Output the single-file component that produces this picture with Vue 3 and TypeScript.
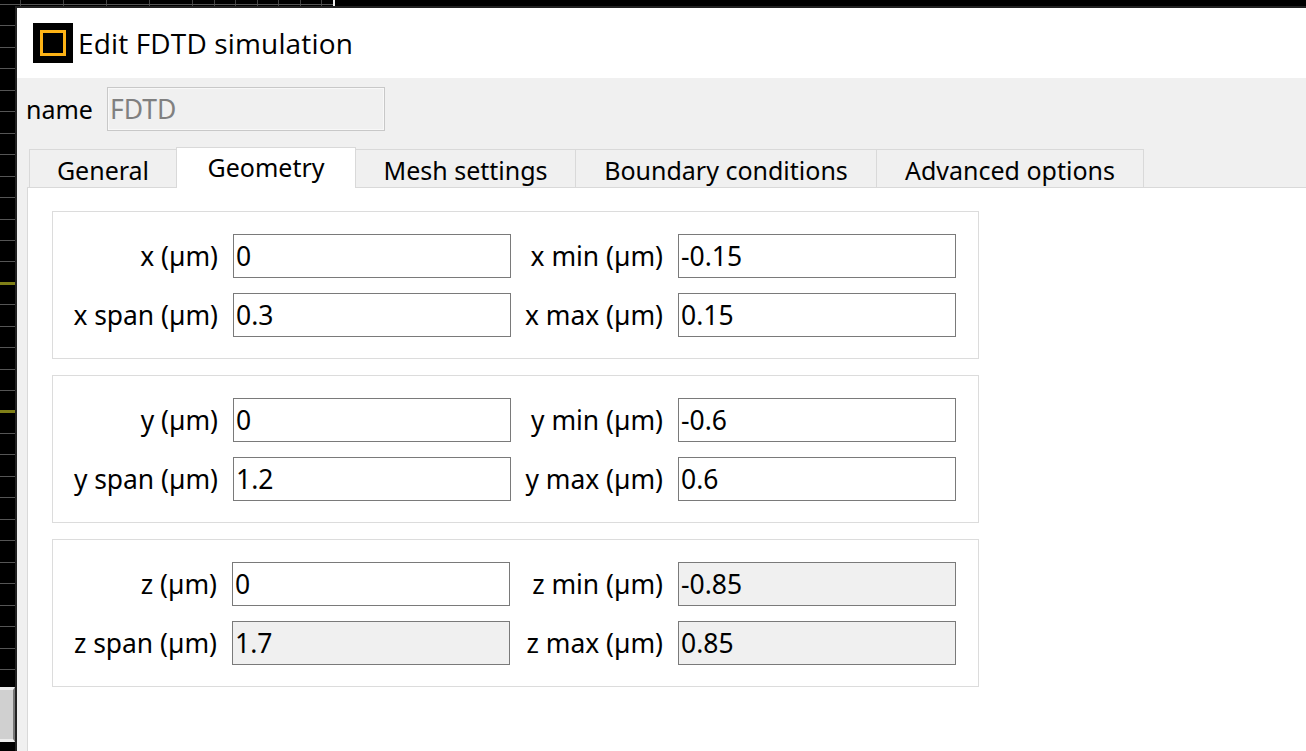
<script setup lang="ts">
interface Field { label: string; value: string; disabled?: boolean }
interface Row { left: Field; right: Field }
interface Group { shift: boolean; rows: Row[] }

const tabs = ['General', 'Geometry', 'Mesh settings', 'Boundary conditions', 'Advanced options']
const groups: Group[] = [
  { shift: false, rows: [
    { left: { label: 'x (µm)', value: '0' }, right: { label: 'x min (µm)', value: '-0.15' } },
    { left: { label: 'x span (µm)', value: '0.3' }, right: { label: 'x max (µm)', value: '0.15' } },
  ] },
  { shift: false, rows: [
    { left: { label: 'y (µm)', value: '0' }, right: { label: 'y min (µm)', value: '-0.6' } },
    { left: { label: 'y span (µm)', value: '1.2' }, right: { label: 'y max (µm)', value: '0.6' } },
  ] },
  { shift: true, rows: [
    { left: { label: 'z (µm)', value: '0' }, right: { label: 'z min (µm)', value: '-0.85', disabled: true } },
    { left: { label: 'z span (µm)', value: '1.7', disabled: true }, right: { label: 'z max (µm)', value: '0.85', disabled: true } },
  ] },
]
</script>

<template>
  <div class="desktop">
    <div class="grid"></div>
    <div class="edge"></div>
    <div class="wire w1"></div>
    <div class="wire w2"></div>
    <div class="side-button"></div>
    <div class="window">
      <header class="titlebar">
        <svg class="logo" width="40" height="40" viewBox="0 0 40 40">
          <rect width="40" height="40" fill="#000" />
          <rect x="8.5" y="8.5" width="23" height="23" fill="none" stroke="#fdb316" stroke-width="3" />
        </svg>
        <span class="title">Edit FDTD simulation</span>
      </header>
      <div class="body">
        <div class="name-row">
          <span class="name-label">name</span>
          <div class="name-input">FDTD</div>
        </div>
        <div class="tabs">
          <div v-for="t in tabs" :key="t" class="tab" :class="{ active: t === 'Geometry' }">{{ t }}</div>
        </div>
        <div class="page">
          <section v-for="(g, i) in groups" :key="i" class="group" :class="{ shift: g.shift }">
            <div v-for="r in g.rows" :key="r.left.label" class="row">
              <label class="lab left">{{ r.left.label }}</label>
              <div class="field" :class="{ disabled: r.left.disabled }">{{ r.left.value }}</div>
              <label class="lab right">{{ r.right.label }}</label>
              <div class="field f2" :class="{ disabled: r.right.disabled }">{{ r.right.value }}</div>
            </div>
          </section>
        </div>
      </div>
    </div>
  </div>
</template>

<style>
html, body { margin: 0; background: #000; overflow: hidden; }
</style>

<style scoped>
.desktop {
  position: relative;
  width: 1306px;
  height: 751px;
  overflow: hidden;
  background: #000;
  font-family: "Noto Sans", sans-serif;
  color: #000;
}
.grid {
  position: absolute;
  left: 0;
  top: 0;
  width: 333px;
  height: 751px;
  background-image:
    repeating-linear-gradient(to bottom, transparent 0 4px, #555 4px 5px, transparent 5px 21.45px),
    repeating-linear-gradient(to right, transparent 0 20px, #444 20px 21px, transparent 21px 21.5px);
  border-right: 2px solid #eee;
}
.edge {
  position: absolute;
  left: 15px;
  top: 6px;
  width: 1291px;
  height: 745px;
  background: #222;
}
.wire {
  position: absolute;
  left: 0;
  width: 15px;
  height: 3px;
  background: #808018;
}
.w1 { top: 282px; }
.w2 { top: 410px; }
.side-button {
  position: absolute;
  left: 0;
  top: 687px;
  width: 15px;
  height: 55px;
  box-sizing: border-box;
  background: #d0d0d0;
  border-top: 3px solid #ececec;
  border-bottom: 3px solid #ececec;
  border-right: 2px solid #777;
}
.window {
  position: absolute;
  left: 17px;
  top: 8px;
  width: 1289px;
  height: 743px;
  display: flex;
  flex-direction: column;
  background: #f0f0f0;
}
.titlebar {
  height: 70px;
  flex: none;
  background: #fff;
  display: flex;
  align-items: center;
  padding-left: 16px;
}
.logo { display: block; }
.title {
  margin-left: 5px;
  font-family: "Open Sans", sans-serif;
  font-size: 28px;
  letter-spacing: 0.15px;
  white-space: nowrap;
}
.body { flex: 1; display: flex; flex-direction: column; min-height: 0; }
.name-row {
  display: flex;
  align-items: center;
  height: 44px;
  margin-top: 9px;
  padding-left: 9px;
}
.name-label { font-size: 25px; width: 81px; }
.name-input {
  box-sizing: border-box;
  width: 278px;
  height: 44px;
  line-height: 43px;
  padding-left: 2px;
  border: 1px solid #c8c8c8;
  box-shadow: inset 0 0 0 1px #f8f8f8;
  font-size: 26.5px;
  color: #808080;
}
.tabs {
  display: flex;
  height: 40px;
  margin-top: 16px;
  padding-left: 13px;
  align-items: flex-end;
  position: relative;
  z-index: 1;
}
.tab {
  height: 38px;
  line-height: 41px;
  box-sizing: border-box;
  border: 1px solid #d9d9d9;
  border-bottom: 0;
  margin-left: -1px;
  text-align: center;
  font-size: 25px;
  white-space: nowrap;
  flex: none;
}
.tab:nth-child(1) { width: 148px; }
.tab:nth-child(2) { width: 180px; }
.tab:nth-child(3) { width: 221px; }
.tab:nth-child(4) { width: 302px; }
.tab:nth-child(5) { width: 268px; }
.tab.active {
  height: 41px;
  line-height: 39px;
  background: #fff;
  margin-bottom: -1px;
}
.page {
  flex: 1;
  margin-left: 10px;
  padding: 23px 0 0 24px;
  background: #fff;
  border-top: 1px solid #d9d9d9;
  border-left: 1px solid #d9d9d9;
  display: flex;
  flex-direction: column;
  gap: 16px;
}
.group {
  box-sizing: border-box;
  width: 927px;
  height: 148px;
  border: 1px solid #dcdcdc;
  padding-top: 22px;
  display: flex;
  flex-direction: column;
  gap: 15px;
}
.row { display: flex; align-items: center; height: 44px; }
.lab { font-size: 26.4px; text-align: right; white-space: nowrap; }
.lab.left { width: 165px; margin-right: 15px; }
.lab.right { width: 152px; margin-right: 15px; }
.field {
  box-sizing: border-box;
  width: 278px;
  height: 44px;
  line-height: 42px;
  border: 1px solid #7a7a7a;
  padding-left: 2px;
  background: #fff;
  font-size: 26.5px;
  flex: none;
}
.field.disabled { background: #f0f0f0; }
.group.shift .lab.left { width: 164px; }
.group.shift .lab.right { width: 153px; }
</style>
